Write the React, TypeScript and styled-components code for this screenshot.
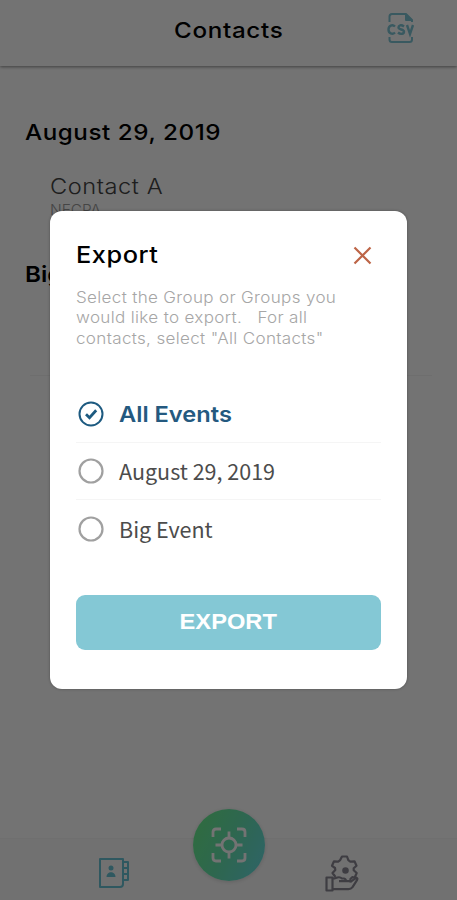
import React from "react";
import styled, { createGlobalStyle } from "styled-components";

const GlobalStyle = createGlobalStyle`
  *, *::before, *::after { box-sizing: border-box; }
  body { margin: 0; font-family: Inter, "Liberation Sans", sans-serif; }
`;

const Screen = styled.div`
  position: relative;
  height: 900px;
  overflow: hidden;
  background: #fff;
  display: flex;
  flex-direction: column;
`;

const Label = styled.span<{ $size: number; $weight?: number; $color?: string; $stretch?: number; $spacing?: number; $origin?: string }>`
  display: inline-block;
  white-space: pre;
  font-size: ${(p) => p.$size}px;
  font-weight: ${(p) => p.$weight ?? 500};
  color: ${(p) => p.$color ?? "#000"};
  letter-spacing: ${(p) => p.$spacing ?? 0}px;
  transform: scaleX(${(p) => p.$stretch ?? 1.1});
  transform-origin: ${(p) => p.$origin ?? "left"};
`;

const Header = styled.header`
  height: 66px;
  flex: none;
  display: grid;
  grid-template-columns: 72px 1fr 72px;
  align-items: center;
  justify-items: center;
  padding: 0 20px 10px 20px;
  box-shadow: 0 1px 3px rgba(0, 0, 0, 0.45);
`;

const HeaderAction = styled.button`
  grid-column: 3;
  display: flex;
  border: 0;
  padding: 0;
  background: none;
  transform: translateX(0);
`;

const HeaderTitle = styled.h1`
  grid-column: 2;
  margin: 0;
  line-height: 28px;
`;

const ContactList = styled.main`
  flex: 1;
  padding: 51px 25px 0;
`;

const GroupTitle = styled.h2`
  margin: 0;
  height: 30px;
  line-height: 30px;
`;

const Contact = styled.div`
  margin: 24px 0 0 25px;
  height: 88px;
  display: flex;
  flex-direction: column;
`;

const ContactLine = styled.div<{ $height: number }>`
  height: ${(p) => p.$height}px;
  line-height: ${(p) => p.$height}px;
`;

const Divider = styled.hr`
  margin: 86px 0 0 5px;
  border: 0;
  border-top: 1px solid #f3f3f3;
`;

const NavBar = styled.nav`
  height: 62px;
  flex: none;
  display: grid;
  grid-template-columns: repeat(3, 114.5px);
  justify-content: center;
  justify-items: center;
  background: #fbfbfb;
  border-top: 1px solid #f6f6f6;
`;

const NavItem = styled.button<{ $top: number }>`
  border: 0;
  padding: 0;
  background: none;
  display: flex;
  align-self: start;
  margin-top: ${(p) => p.$top}px;
`;

const ScanButton = styled.button`
  width: 72px;
  height: 72px;
  margin-top: -30px;
  padding: 0;
  border: 0;
  border-radius: 50%;
  display: grid;
  place-items: center;
  background: linear-gradient(115deg, #69f08c 5%, #66e4b0 50%, #68dce8 100%);
  box-shadow: 0 1px 4px rgba(0, 0, 0, 0.15);
`;

const Overlay = styled.div`
  position: absolute;
  inset: 0;
  background: rgba(0, 0, 0, 0.55);
  padding: 211px 50.5px 0 50px;
`;

const Dialog = styled.section`
  height: 478px;
  padding: 26px 25.5px 0 26px;
  border-radius: 12px;
  background: #fff;
  box-shadow: 0 0 3px rgba(0, 0, 0, 0.3);
  display: flex;
  flex-direction: column;
`;

const DialogHeader = styled.div`
  height: 36px;
  display: flex;
  align-items: center;
  justify-content: space-between;
  padding-right: 9px;
`;

const CloseButton = styled.button`
  border: 0;
  padding: 0;
  background: none;
  display: flex;
`;

const Description = styled.div`
  margin-top: 15px;
  height: 81px;
  display: flex;
  flex-direction: column;
  line-height: 20.4px;
`;

const Options = styled.div`
  margin-top: 17px;
`;

const Option = styled.div`
  height: 57px;
  display: flex;
  align-items: center;
  gap: 15px;
  padding-left: 2px;
  border-bottom: 1px solid #f5f5f5;
  &:last-child { border-bottom: 0; }
`;

const OptionText = styled.span`
  font-family: "Noto Sans CJK SC", "Noto Sans", sans-serif;
  font-size: 21.5px;
  line-height: 28px;
  color: #4c4c4c;
`;

const ExportButton = styled.button`
  margin-top: 38px;
  height: 55px;
  border: 0;
  border-radius: 9px;
  background: #84c8d5;
  display: flex;
  align-items: center;
  justify-content: center;
`;

const CsvIcon = () => (
  <svg width="28" height="32" viewBox="0 0 28 32" fill="none" stroke="#7ec5d5" strokeWidth="2">
    <path d="M2.5 10V4.5Q2.5 2 5 2H19l6 6v2M19 2v6h6M2.5 25v2.5Q2.5 30 5 30H22.500Q25 30 25 27.500V25" strokeLinejoin="round" />
    <path d="M19 2v6h6z" fill="#7ec5d5" stroke="none" />
    <path d="M8 14.500C5.500 12 1.500 13.500 1.500 17.500S5.500 23 8 20.500M17 14.500C14 12.300 11.500 13.500 11.500 15.500c0 2.500 5.500 1.500 5.500 4.200 0 2.300-3.500 3-6 .8M20 13l3 9 3-9" strokeWidth="2.4" />
  </svg>
);

const ContactBookIcon = () => (
  <svg width="32" height="32" viewBox="0 0 32 32" fill="none" stroke="#68c4d5" strokeWidth="2" strokeLinejoin="round">
    <path d="M2 2H25V27Q25 30 22 30H2ZM25 5h5v18h-5M25 11h5M25 17h5" />
    <circle cx="13" cy="11" r="2.500" fill="#68c4d5" stroke="none" />
    <path d="M8.500 20c0-6.500 9-6.500 9 0z" fill="#68c4d5" stroke="none" />
  </svg>
);

const ScanIcon = () => (
  <svg width="36" height="36" viewBox="0 0 36 36" fill="none" stroke="#fff" strokeWidth="2.800">
    <path d="M2 10V5q0-3 3-3h5M26 2h5q3 0 3 3v5M34 26v5q0 3-3 3h-5M10 34H5q-3 0-3-3v-5" />
    <circle cx="18" cy="18" r="7" />
    <path d="M18 4.500V11M18 25v6.500M4.500 18H11M25 18h6.500" />
  </svg>
);

const ServiceIcon = () => (
  <svg width="36" height="37" viewBox="0 0 36 37" fill="none" stroke="#8a8793" strokeWidth="2.200" strokeLinejoin="round">
    <path d="M10.500 22 7.500 18l2.800-3-.3-2-3-2.200 2-4.500 4.200.3 2-1.500L17 1.500h5l1.300 3.600 2 1.500 4.200-.3 2 4.500-2.800 2.500v2l3 2.700-2 4.500-2.500-.3-1.800 1.800.2 3.500" />
    <circle cx="20.500" cy="15.500" r="2.200" fill="#8a8793" />
    <path d="M1.500 22.500h6v13h-6zM7.500 24l5-1.500q2.500-.8 4.500 1h2q2 .4 2 2.700h-7M21 26.200h5.500l5-3.500q1.500.5.500 2.500l-4.500 7q-1.500 2-4 2h-16" />
  </svg>
);

const CheckedIcon = () => (
  <svg width="26" height="26" viewBox="0 0 26 26" fill="none" stroke="#1d5a80">
    <circle cx="13" cy="13" r="11.500" strokeWidth="2" />
    <path d="M8 13.300l3.500 3.400 6.700-7.400" strokeWidth="2.800" />
  </svg>
);

const UncheckedIcon = () => (
  <svg width="26" height="26" viewBox="0 0 26 26" fill="none" stroke="#a0a0a0">
    <circle cx="13" cy="13" r="11.500" strokeWidth="2.200" />
  </svg>
);

const CloseIcon = () => (
  <svg width="19" height="19" viewBox="0 0 19 19" fill="none" stroke="#bd6547" strokeWidth="2.200">
    <path d="M1.500 1.500l16 16M17.500 1.500l-16 16" />
  </svg>
);

export default function App() {
  return (
    <>
      <GlobalStyle />
      <Screen>
        <Header>
          <HeaderTitle>
            <Label $size={22} $origin="center" $spacing={0.6}>Contacts</Label>
          </HeaderTitle>
          <HeaderAction aria-label="Export CSV"><CsvIcon /></HeaderAction>
        </Header>
        <ContactList>
          <GroupTitle><Label $size={22} $spacing={0.5}>August 29, 2019</Label></GroupTitle>
          <Contact>
            <ContactLine $height={30}><Label $size={21.5} $weight={300} $color="#444" $spacing={0.5}>Contact A</Label></ContactLine>
            <ContactLine $height={16}><Label $size={14} $weight={300} $color="#999">NECPA</Label></ContactLine>
          </Contact>
          <GroupTitle><Label $size={22} $weight={600}>Big Event</Label></GroupTitle>
          <Divider />
        </ContactList>
        <NavBar>
          <NavItem $top={18} aria-label="Contacts"><ContactBookIcon /></NavItem>
          <ScanButton aria-label="Scan"><ScanIcon /></ScanButton>
          <NavItem $top={16} aria-label="Services"><ServiceIcon /></NavItem>
        </NavBar>
        <Overlay>
          <Dialog role="dialog" aria-label="Export">
            <DialogHeader>
              <Label $size={23} $spacing={0.5}>Export</Label>
              <CloseButton aria-label="Close"><CloseIcon /></CloseButton>
            </DialogHeader>
            <Description>
              <Label $size={15.5} $weight={300} $color="#a6a6a6" $spacing={0.3}>Select the Group or Groups you</Label>
              <Label $size={15.5} $weight={300} $color="#a6a6a6" $spacing={0.3}>{"would like to export.   For all"}</Label>
              <Label $size={15.5} $weight={300} $color="#a6a6a6" $spacing={0.3}>contacts, select "All Contacts"</Label>
            </Description>
            <Options>
              <Option><CheckedIcon /><Label $size={21.5} $weight={600} $color="#24597f">All Events</Label></Option>
              <Option><UncheckedIcon /><OptionText>August 29, 2019</OptionText></Option>
              <Option><UncheckedIcon /><OptionText>Big Event</OptionText></Option>
            </Options>
            <ExportButton><Label $size={21.5} $weight={600} $color="#fff" $origin="center">EXPORT</Label></ExportButton>
          </Dialog>
        </Overlay>
      </Screen>
    </>
  );
}
